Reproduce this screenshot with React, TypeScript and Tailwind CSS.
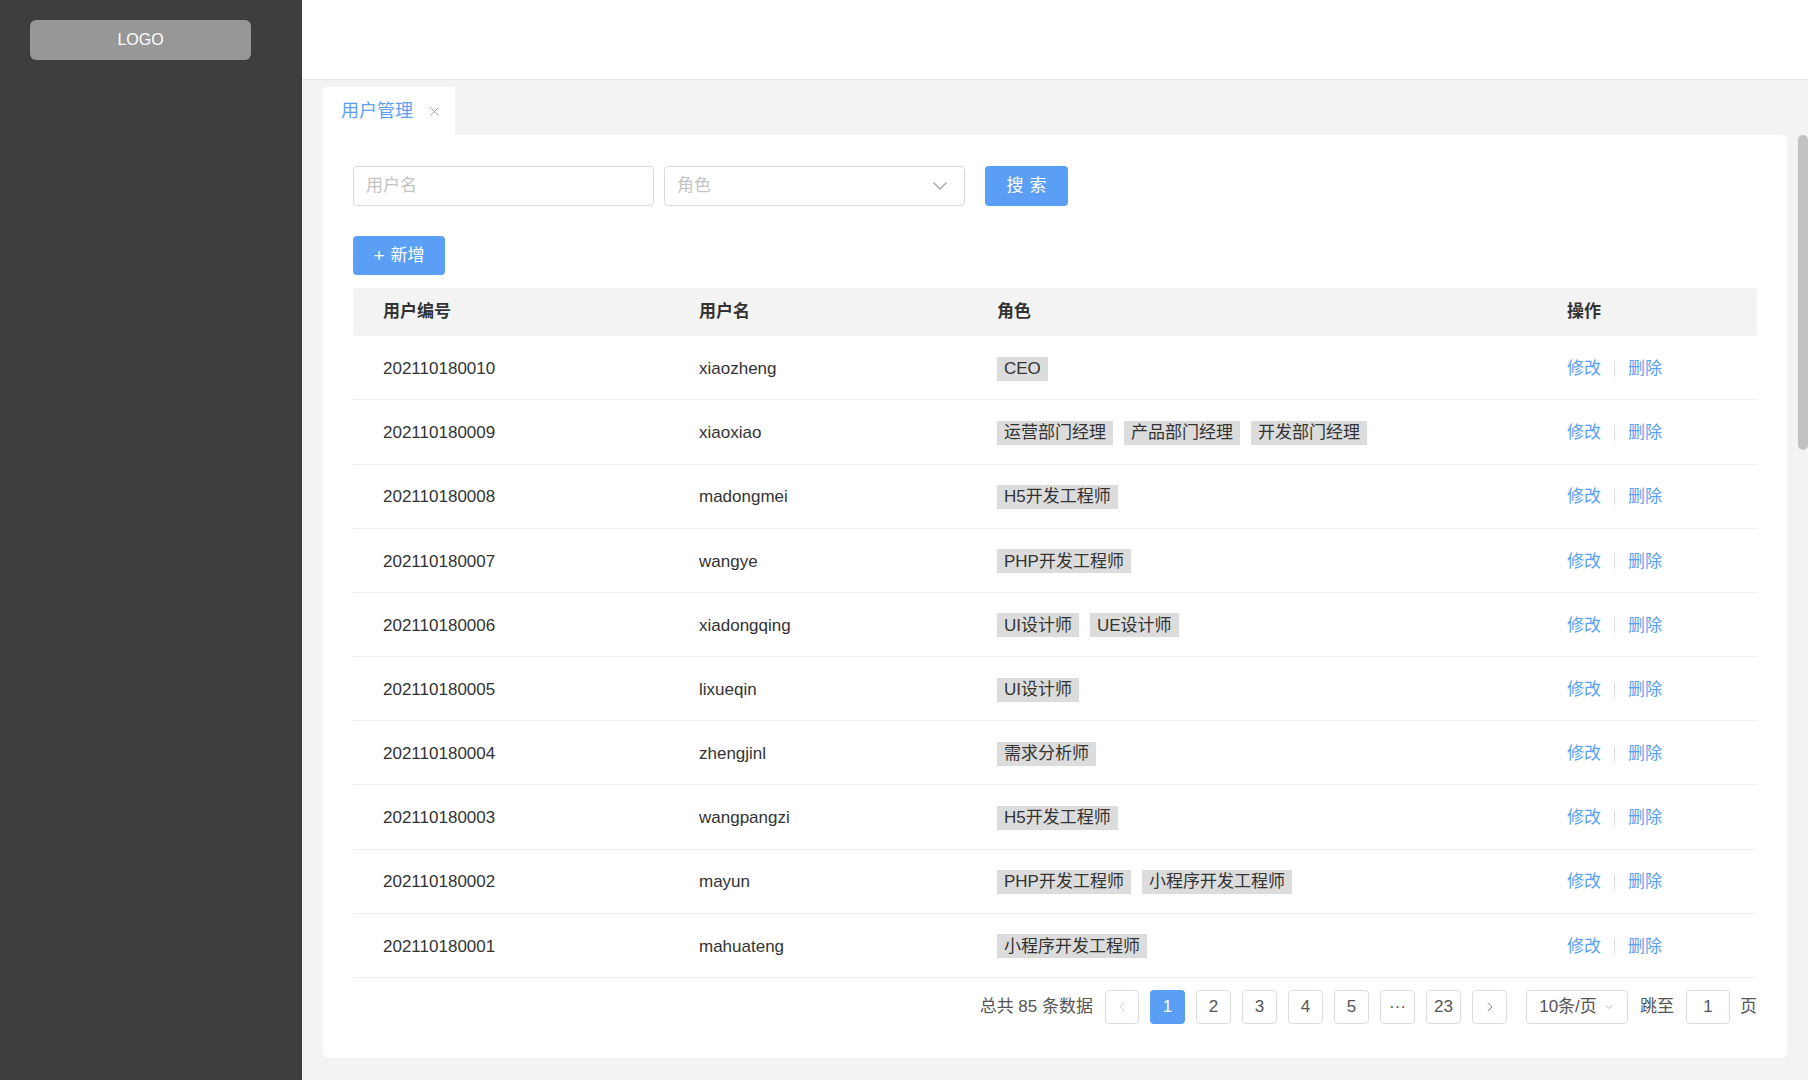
import { ChevronDown, ChevronLeft, ChevronRight, X } from "lucide-react"

type User = { id: string; name: string; roles: string[] }

const users: User[] = [
  { id: "202110180010", name: "xiaozheng", roles: ["CEO"] },
  { id: "202110180009", name: "xiaoxiao", roles: ["运营部门经理", "产品部门经理", "开发部门经理"] },
  { id: "202110180008", name: "madongmei", roles: ["H5开发工程师"] },
  { id: "202110180007", name: "wangye", roles: ["PHP开发工程师"] },
  { id: "202110180006", name: "xiadongqing", roles: ["UI设计师", "UE设计师"] },
  { id: "202110180005", name: "lixueqin", roles: ["UI设计师"] },
  { id: "202110180004", name: "zhengjinl", roles: ["需求分析师"] },
  { id: "202110180003", name: "wangpangzi", roles: ["H5开发工程师"] },
  { id: "202110180002", name: "mayun", roles: ["PHP开发工程师", "小程序开发工程师"] },
  { id: "202110180001", name: "mahuateng", roles: ["小程序开发工程师"] },
]

const pages = ["1", "2", "3", "4", "5", "···", "23"]

const cols = "grid grid-cols-[316px_298px_570px_1fr]"

export default function App() {
  return (
    <div
      className="flex h-[1080px] w-full overflow-hidden bg-[#f3f3f3] text-[#333]"
      style={{ fontFamily: '"Liberation Sans", "Noto Sans CJK SC", sans-serif' }}
    >
      {/* sidebar */}
      <aside className="w-[302px] shrink-0 bg-[#3e3e3e] pt-5 pl-[30px]">
        <div className="flex h-10 w-[221px] items-center justify-center rounded-md bg-[#979797] text-[16px] font-medium text-white">
          LOGO
        </div>
      </aside>

      <div className="flex min-w-0 flex-1 flex-col">
        <header className="h-[80px] shrink-0 border-b border-[#e6e6e6] bg-white" />

        <div className="flex flex-1 pl-[21px]">
          <div className="flex min-w-0 flex-1 flex-col">
            {/* tabs */}
            <div className="mt-[7px] flex h-[48px]">
              <div className="flex items-center gap-[14px] rounded-t-[3px] bg-white pl-[18px] pr-[13px] text-[18px] text-[#5a9ff5]">
                <span>用户管理</span>
                <X className="h-[15px] w-[15px] text-[#a0a0a0]" strokeWidth={1.5} />
              </div>
            </div>

            {/* card */}
            <div className="flex h-[923px] flex-col rounded-b-md rounded-tr-md bg-white px-[30px] pt-[31px] pb-[34px]">
              <div className="flex items-center">
                <div className="flex h-10 w-[301px] items-center rounded border border-[#d9d9d9] px-3 text-[17px] text-[#c3c3c3]">
                  用户名
                </div>
                <div className="ml-[10px] flex h-10 w-[301px] items-center justify-between rounded border border-[#d9d9d9] px-3 text-[17px] text-[#c3c3c3]">
                  <span>角色</span>
                  <ChevronDown className="h-6 w-6 text-[#a8a8a8]" strokeWidth={1.5} />
                </div>
                <button className="ml-[20px] flex h-10 w-[83px] items-center justify-center rounded bg-[#5a9ff5] text-[17px] tracking-[6px] text-white">
                  <span className="pl-[6px]">搜索</span>
                </button>
              </div>

              <button className="mt-[30px] flex h-10 w-[92px] items-center justify-center gap-1.5 rounded bg-[#5a9ff5] text-[17px] text-white">
                <span className="text-[19px] leading-none">+</span>
                <span>新增</span>
              </button>

              {/* table */}
              <div className="mt-[13px] w-[1404px]">
                <div className={`${cols} h-[48px] items-center rounded bg-[#f3f3f3] text-[17px] font-bold text-[#333]`}>
                  <div className="pl-[30px]">用户编号</div>
                  <div className="pl-[30px]">用户名</div>
                  <div className="pl-[30px]">角色</div>
                  <div className="pl-[30px]">操作</div>
                </div>
                {users.map((u) => (
                  <div
                    key={u.id}
                    className={`${cols} h-[64.2px] items-center border-b border-[#efefef] pt-[2px] text-[17px] text-[#333]`}
                  >
                    <div className="pl-[30px]">{u.id}</div>
                    <div className="pl-[30px]">{u.name}</div>
                    <div className="flex gap-[11px] pl-[30px]">
                      {u.roles.map((r) => (
                        <span key={r} className="flex h-6 items-center bg-[#dcdcdc] px-[7px] text-[17px] text-[#333]">
                          {r}
                        </span>
                      ))}
                    </div>
                    <div className="flex items-center pl-[30px] text-[17px] text-[#5a9ff5]">
                      <span>修改</span>
                      <span className="mx-[13px] h-4 w-px bg-[#dcdcdc]" />
                      <span>删除</span>
                    </div>
                  </div>
                ))}

                {/* pagination */}
                <div className="mt-[12px] flex h-[34px] items-center justify-end text-[17px] text-[#555]">
                  <span className="mr-[12px]">总共 85 条数据</span>
                  <div className="flex h-[34px] w-[34px] items-center justify-center rounded border border-[#dedede] text-[#c5c5c5]">
                    <ChevronLeft className="h-4 w-4" strokeWidth={1.25} />
                  </div>
                  {pages.map((p) => (
                    <div
                      key={p}
                      className={
                        p === "1"
                          ? "ml-[11px] flex h-[34px] w-[35px] items-center justify-center rounded bg-[#5a9ff5] text-white"
                          : "ml-[11px] flex h-[34px] w-[35px] items-center justify-center rounded border border-[#dedede] text-[#555]"
                      }
                    >
                      {p}
                    </div>
                  ))}
                  <div className="ml-[11px] flex h-[34px] w-[35px] items-center justify-center rounded border border-[#dedede] text-[#777]">
                    <ChevronRight className="h-4 w-4" strokeWidth={1.25} />
                  </div>
                  <div className="ml-[19px] flex h-[34px] w-[102px] items-center justify-center gap-1.5 rounded border border-[#dedede]">
                    <span>10条/页</span>
                    <ChevronDown className="h-3 w-3 text-[#999]" strokeWidth={1.5} />
                  </div>
                  <span className="ml-[12px]">跳至</span>
                  <div className="ml-[12px] flex h-[34px] w-[44px] items-center justify-center rounded border border-[#dedede]">
                    1
                  </div>
                  <span className="ml-[10px]">页</span>
                </div>
              </div>
            </div>
          </div>

          {/* scrollbar */}
          <div className="ml-[11px] w-[10px] shrink-0 pt-[55px]">
            <div className="h-[315px] w-[10px] rounded-full bg-[#c1c1c1]" />
          </div>
        </div>
      </div>
    </div>
  )
}
